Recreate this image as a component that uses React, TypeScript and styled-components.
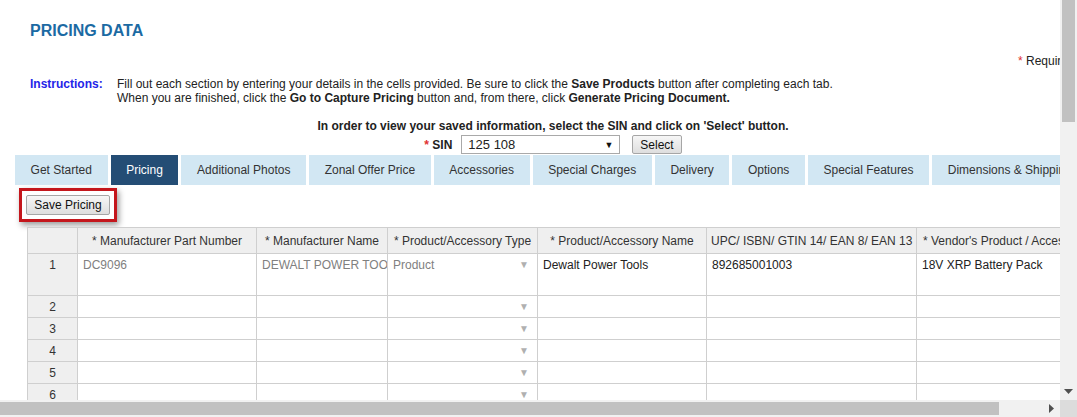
import styled, { createGlobalStyle } from 'styled-components';

const GlobalStyle = createGlobalStyle`
  html, body {
    margin: 0;
    padding: 0;
    overflow: hidden;
    background: #fff;
  }
  body {
    font-family: "Liberation Sans", Arial, sans-serif;
    font-size: 12px;
    color: #222;
  }
`;

const Frame = styled.div`
  width: 1077px;
  height: 417px;
  display: grid;
  grid-template-columns: 1fr 17px;
  grid-template-rows: 1fr 17px;
`;

const Viewport = styled.div`
  overflow: hidden;
`;

const Page = styled.div`
  width: 1120px;
`;

const Title = styled.h1`
  margin: 21px 0 0 30px;
  font-size: 16px;
  line-height: 20px;
  font-weight: bold;
  color: #1b6aa3;
`;

const RequiredRow = styled.div`
  margin-top: 11px;
  padding-right: 10px;
  text-align: right;
  line-height: 14px;
  height: 14px;
  padding-top: 2px;
`;

const Star = styled.span`
  color: #e03030;
`;

const Instructions = styled.div`
  display: grid;
  grid-template-columns: 87px 1fr;
  margin: 9px 0 0 30px;
  line-height: 14px;
`;

const InstrLabel = styled.span`
  font-weight: bold;
  color: #2424e8;
`;

const CenterNote = styled.div`
  width: 1106px;
  margin-top: 14px;
  text-align: center;
  font-weight: bold;
  line-height: 14px;
`;

const SinRow = styled.div`
  width: 1106px;
  margin-top: 2px;
  display: flex;
  justify-content: center;
  align-items: center;
  height: 19px;
`;

const SinLabel = styled.span`
  font-weight: bold;
  margin-right: 9px;
`;

const FakeSelect = styled.div`
  width: 159px;
  height: 19px;
  box-sizing: border-box;
  border: 1px solid #a9a9a9;
  background: #fff;
  display: flex;
  align-items: center;
  justify-content: space-between;
  padding: 0 6px;
  font-size: 13px;
  margin-right: 12px;
`;

const SelectArrow = styled.span`
  font-size: 9px;
  color: #111;
`;

const GrayButton = styled.button<{ $h?: number }>`
  font-family: "Liberation Sans", Arial, sans-serif;
  font-size: 12px;
  height: ${(p) => p.$h ?? 19}px;
  padding: 0 7px;
  border: 1px solid #a6a6a6;
  border-radius: 2px;
  background: linear-gradient(#f6f6f6, #dedede);
  color: #111;
  cursor: pointer;
`;

const Tabs = styled.div`
  display: flex;
  gap: 3px;
  margin: 1px 0 0 15px;
`;

const Tab = styled.div<{ $active?: boolean }>`
  height: 30px;
  line-height: 30px;
  padding: 0 15.6px;
  font-size: 12px;
  white-space: nowrap;
  background: ${(p) => (p.$active ? '#244d75' : '#d2e7f3')};
  color: ${(p) => (p.$active ? '#fff' : '#333')};
  flex-shrink: 0;
`;

const SaveBar = styled.div`
  margin: 3px 0 0 19px;
  width: 98px;
  height: 34px;
  box-sizing: border-box;
  border: 3px solid #c4161c;
  box-shadow: 2px 3px 6px rgba(0, 0, 0, 0.4);
  display: flex;
  align-items: center;
  justify-content: center;
`;

const Grid = styled.table`
  margin: 5px 0 0 27px;
  border-collapse: collapse;
  table-layout: fixed;
  width: 1129px;
`;

const HeadCell = styled.th`
  height: 25px;
  padding: 0 4px;
  background: #efefef;
  border: 1px solid #cfcfcf;
  font-weight: normal;
  color: #333;
  text-align: center;
  white-space: nowrap;
  overflow: hidden;
`;

const RowNum = styled.td`
  background: #efefef;
  border: 1px solid #cfcfcf;
  text-align: center;
  vertical-align: top;
  padding-top: 4px;
  color: #333;
`;

const Cell = styled.td<{ $muted?: boolean; $tall?: boolean }>`
  height: ${(p) => (p.$tall ? 37 : 17)}px;
  border: 1px solid #cfcfcf;
  padding: 4px 5px 0 5px;
  vertical-align: top;
  color: ${(p) => (p.$muted ? '#808080' : '#222')};
  white-space: nowrap;
  overflow: hidden;
  background: #fff;
`;

const DropCell = styled.div`
  display: flex;
  justify-content: space-between;
`;

const DropArrow = styled.span`
  font-size: 10px;
  color: #b0b0b0;
  padding-top: 1px;
  margin-right: 3px;
`;

const VScroll = styled.div`
  background: #f1f1f1;
  display: flex;
  flex-direction: column;
  align-items: center;
  justify-content: space-between;
  padding-bottom: 6px;
  box-sizing: border-box;
`;

const VThumb = styled.div`
  width: 13px;
  height: 122px;
  background: #c1c1c1;
`;

const HScroll = styled.div`
  background: #f1f1f1;
  display: flex;
  align-items: center;
  padding-right: 6px;
`;

const HThumb = styled.div`
  width: 999px;
  height: 13px;
  background: #c1c1c1;
`;

const HSpacer = styled.div`
  flex: 1;
`;

const Corner = styled.div`
  background: #dcdcdc;
`;

const Arrow = styled.svg`
  display: block;
`;

const headers = [
  '',
  '* Manufacturer Part Number',
  '* Manufacturer Name',
  '* Product/Accessory Type',
  '* Product/Accessory Name',
  'UPC/ ISBN/ GTIN 14/ EAN 8/ EAN 13',
  "* Vendor's Product / Accessory Description",
];
const widths = [50, 179, 131, 150, 169, 210, 240];

const tabs = [
  'Get Started',
  'Pricing',
  'Additional Photos',
  'Zonal Offer Price',
  'Accessories',
  'Special Charges',
  'Delivery',
  'Options',
  'Special Features',
  'Dimensions & Shipping',
];

export default function App() {
  return (
    <Frame>
      <GlobalStyle />
      <Viewport>
        <Page>
          <Title>PRICING DATA</Title>
          <RequiredRow>
            <Star>*</Star> Required Fields
          </RequiredRow>
          <Instructions>
            <InstrLabel>Instructions:</InstrLabel>
            <div>
              Fill out each section by entering your details in the cells provided. Be sure to click the <b>Save Products</b> button after completing each tab.
              <br />
              When you are finished, click the <b>Go to Capture Pricing</b> button and, from there, click <b>Generate Pricing Document.</b>
            </div>
          </Instructions>
          <CenterNote>
            In order to view your saved information, select the SIN and click on 'Select' button.
          </CenterNote>
          <SinRow>
            <SinLabel>
              <Star>*</Star> SIN
            </SinLabel>
            <FakeSelect>
              125 108
              <SelectArrow>▼</SelectArrow>
            </FakeSelect>
            <GrayButton>Select</GrayButton>
          </SinRow>
          <Tabs>
            {tabs.map((t) => (
              <Tab key={t} $active={t === 'Pricing'}>{t}</Tab>
            ))}
          </Tabs>
          <SaveBar>
            <GrayButton $h={20}>Save Pricing</GrayButton>
          </SaveBar>
          <Grid>
            <colgroup>
              {widths.map((w, i) => (
                <col key={i} style={{ width: w }} />
              ))}
            </colgroup>
            <thead>
              <tr>
                {headers.map((h, i) => (
                  <HeadCell key={i}>{h}</HeadCell>
                ))}
              </tr>
            </thead>
            <tbody>
              <tr>
                <RowNum>1</RowNum>
                <Cell $tall $muted>DC9096</Cell>
                <Cell $tall $muted>DEWALT POWER TOOLS</Cell>
                <Cell $tall $muted>
                  <DropCell>
                    Product
                    <DropArrow>▼</DropArrow>
                  </DropCell>
                </Cell>
                <Cell $tall>Dewalt Power Tools</Cell>
                <Cell $tall>892685001003</Cell>
                <Cell $tall>18V XRP Battery Pack</Cell>
              </tr>
              {[2, 3, 4, 5, 6].map((n) => (
                <tr key={n}>
                  <RowNum>{n}</RowNum>
                  <Cell />
                  <Cell />
                  <Cell>
                    <DropCell>
                      <span />
                      <DropArrow>▼</DropArrow>
                    </DropCell>
                  </Cell>
                  <Cell />
                  <Cell />
                  <Cell />
                </tr>
              ))}
            </tbody>
          </Grid>
        </Page>
      </Viewport>
      <VScroll>
        <VThumb />
        <Arrow width="9" height="5" viewBox="0 0 9 5">
          <path d="M0 0 L9 0 L4.5 5 Z" fill="#505050" />
        </Arrow>
      </VScroll>
      <HScroll>
        <HThumb />
        <HSpacer />
        <Arrow width="5" height="9" viewBox="0 0 5 9">
          <path d="M0 0 L5 4.5 L0 9 Z" fill="#505050" />
        </Arrow>
      </HScroll>
      <Corner />
    </Frame>
  );
}
